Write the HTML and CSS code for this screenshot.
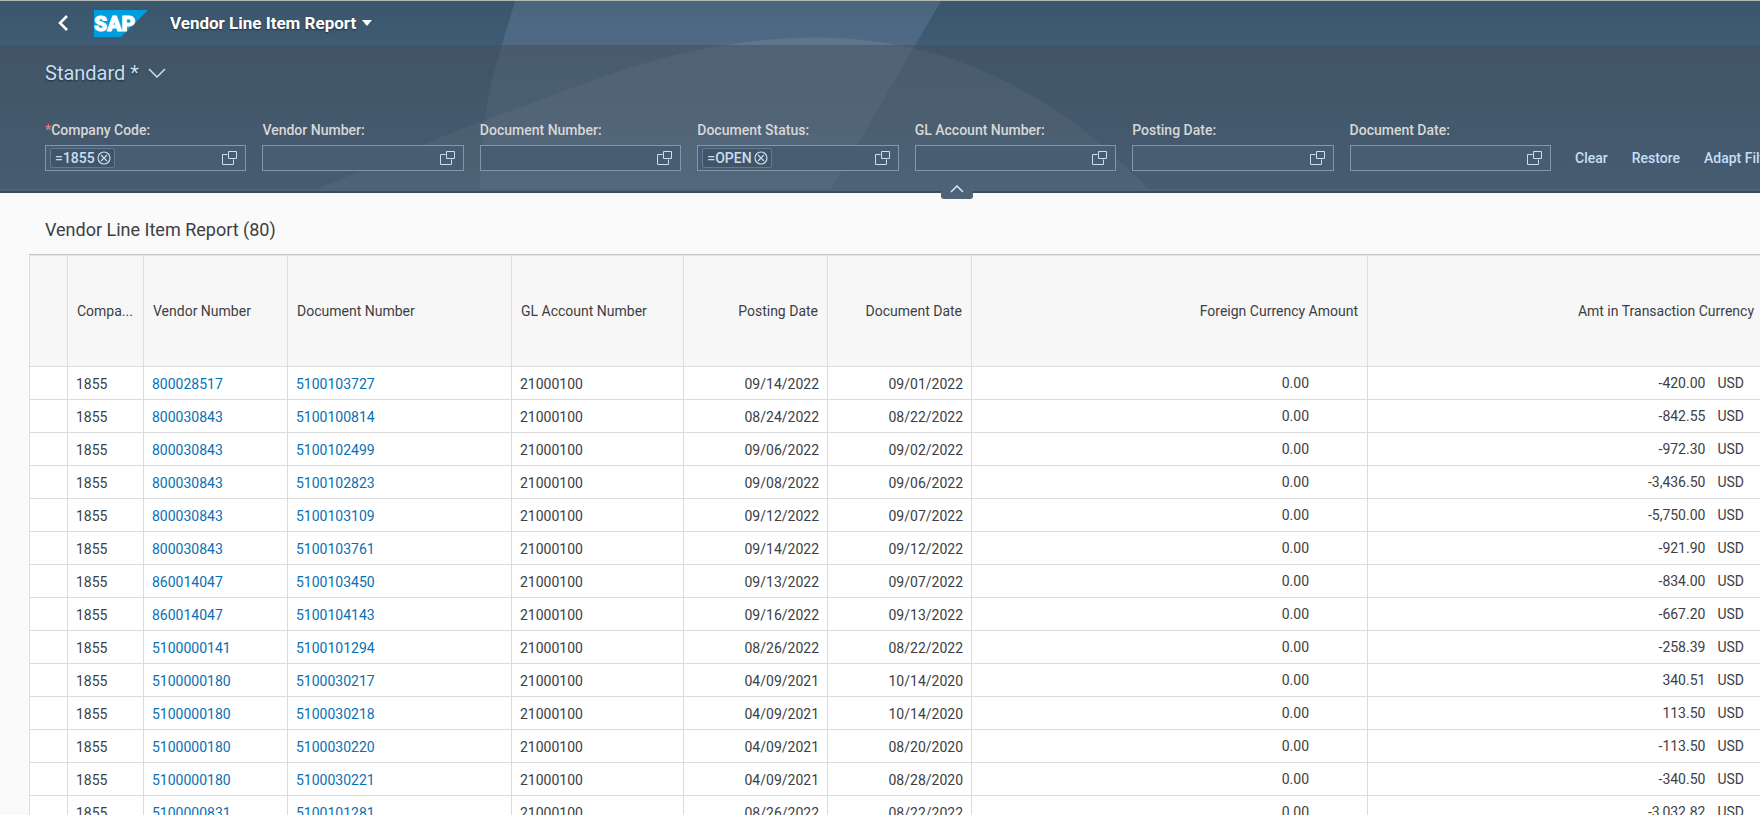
FILE: index.html
```html
<!DOCTYPE html>
<html lang="en">
<head>
<meta charset="utf-8">
<meta name="viewport" content="width=device-width, initial-scale=1">
<title>Vendor Line Item Report</title>
<link rel="stylesheet" href="styles.css">
</head>
<body>
<svg class="defs" aria-hidden="true">
  <symbol id="value-help" viewBox="0 0 16 16"><path d="M6.500 4.500H1.500V14.500H12.500V9.500M7.500 1.500H15.500V8.500H7.500Z"/></symbol>
  <symbol id="decline" viewBox="0 0 14 14"><circle cx="7" cy="7" r="6"/><path d="M4 4L10 10M10 4L4 10"/></symbol>
</svg>
<header class="top">
  <svg class="top-art" viewBox="0 0 1760 192" preserveAspectRatio="none" aria-hidden="true">
    <path class="art-band" d="M515 0H941L830 192H480C481 130 488 90 502 44Z"/>
    <path class="art-dome" d="M312 192C400 157 440 136 500 115C600 78 690 37 816 37C960 37 1070 105 1150 192Z"/>
  </svg>
  <div class="shell">
    <button class="back" type="button" aria-label="Back"><svg viewBox="0 0 12 18"><path d="M10 2L3 9L10 16"/></svg></button>
    <a class="logo" href="#" aria-label="SAP home"><svg viewBox="0 0 54 27"><path d="M0 0H54L27 27H0Z"/><text x="0" y="21">SAP</text></svg></a>
    <button class="app-title" type="button">Vendor Line Item Report<svg viewBox="0 0 10 6"><path d="M0 0H10L5 6Z"/></svg></button>
  </div>
  <div class="filterbar">
    <button class="variant" type="button">Standard *<svg viewBox="0 0 18 10"><path d="M1 1L9 9L17 1"/></svg></button>
    <div class="filter-row">
      <div class="filters">
        <div class="filter"><label for="f1"><span class="required">*</span>Company Code:</label>
          <div class="field"><span class="token">=1855<button type="button" aria-label="Remove 1855"><svg><use href="#decline"/></svg></button></span><input id="f1" type="text"><button class="help" type="button" aria-label="Value help"><svg><use href="#value-help"/></svg></button></div></div>
        <div class="filter"><label for="f2">Vendor Number:</label>
          <div class="field"><input id="f2" type="text"><button class="help" type="button" aria-label="Value help"><svg><use href="#value-help"/></svg></button></div></div>
        <div class="filter"><label for="f3">Document Number:</label>
          <div class="field"><input id="f3" type="text"><button class="help" type="button" aria-label="Value help"><svg><use href="#value-help"/></svg></button></div></div>
        <div class="filter"><label for="f4">Document Status:</label>
          <div class="field"><span class="token">=OPEN<button type="button" aria-label="Remove OPEN"><svg><use href="#decline"/></svg></button></span><input id="f4" type="text"><button class="help" type="button" aria-label="Value help"><svg><use href="#value-help"/></svg></button></div></div>
        <div class="filter"><label for="f5">GL Account Number:</label>
          <div class="field"><input id="f5" type="text"><button class="help" type="button" aria-label="Value help"><svg><use href="#value-help"/></svg></button></div></div>
        <div class="filter"><label for="f6">Posting Date:</label>
          <div class="field"><input id="f6" type="text"><button class="help" type="button" aria-label="Value help"><svg><use href="#value-help"/></svg></button></div></div>
        <div class="filter"><label for="f7">Document Date:</label>
          <div class="field"><input id="f7" type="text"><button class="help" type="button" aria-label="Value help"><svg><use href="#value-help"/></svg></button></div></div>
      </div>
      <div class="actions"><button type="button">Clear</button><button type="button">Restore</button><button type="button">Adapt Filters</button></div>
    </div>
  </div>
  <button class="collapse" type="button" aria-label="Collapse header"><svg viewBox="0 0 14 8"><path d="M1 7L7 1L13 7"/></svg></button>
</header>
<main class="report">
  <h1>Vendor Line Item Report (80)</h1>
  <table>
    <colgroup><col class="c-sel"><col class="c-company"><col class="c-vendor"><col class="c-doc"><col class="c-gl"><col class="c-date"><col class="c-date"><col class="c-foreign"><col></colgroup>
    <thead><tr><th></th><th>Compa...</th><th>Vendor Number</th><th>Document Number</th><th>GL Account Number</th><th class="num">Posting Date</th><th class="num">Document Date</th><th class="num">Foreign Currency Amount</th><th class="num last">Amt in Transaction Currency</th></tr></thead>
    <tbody>
    <tr><td></td><td>1855</td><td><a href="#">800028517</a></td><td><a href="#">5100103727</a></td><td>21000100</td><td class="num">09/14/2022</td><td class="num">09/01/2022</td><td class="amount foreign">0.00</td><td class="amount">-420.00<span>USD</span></td></tr>
    <tr><td></td><td>1855</td><td><a href="#">800030843</a></td><td><a href="#">5100100814</a></td><td>21000100</td><td class="num">08/24/2022</td><td class="num">08/22/2022</td><td class="amount foreign">0.00</td><td class="amount">-842.55<span>USD</span></td></tr>
    <tr><td></td><td>1855</td><td><a href="#">800030843</a></td><td><a href="#">5100102499</a></td><td>21000100</td><td class="num">09/06/2022</td><td class="num">09/02/2022</td><td class="amount foreign">0.00</td><td class="amount">-972.30<span>USD</span></td></tr>
    <tr><td></td><td>1855</td><td><a href="#">800030843</a></td><td><a href="#">5100102823</a></td><td>21000100</td><td class="num">09/08/2022</td><td class="num">09/06/2022</td><td class="amount foreign">0.00</td><td class="amount">-3,436.50<span>USD</span></td></tr>
    <tr><td></td><td>1855</td><td><a href="#">800030843</a></td><td><a href="#">5100103109</a></td><td>21000100</td><td class="num">09/12/2022</td><td class="num">09/07/2022</td><td class="amount foreign">0.00</td><td class="amount">-5,750.00<span>USD</span></td></tr>
    <tr><td></td><td>1855</td><td><a href="#">800030843</a></td><td><a href="#">5100103761</a></td><td>21000100</td><td class="num">09/14/2022</td><td class="num">09/12/2022</td><td class="amount foreign">0.00</td><td class="amount">-921.90<span>USD</span></td></tr>
    <tr><td></td><td>1855</td><td><a href="#">860014047</a></td><td><a href="#">5100103450</a></td><td>21000100</td><td class="num">09/13/2022</td><td class="num">09/07/2022</td><td class="amount foreign">0.00</td><td class="amount">-834.00<span>USD</span></td></tr>
    <tr><td></td><td>1855</td><td><a href="#">860014047</a></td><td><a href="#">5100104143</a></td><td>21000100</td><td class="num">09/16/2022</td><td class="num">09/13/2022</td><td class="amount foreign">0.00</td><td class="amount">-667.20<span>USD</span></td></tr>
    <tr><td></td><td>1855</td><td><a href="#">5100000141</a></td><td><a href="#">5100101294</a></td><td>21000100</td><td class="num">08/26/2022</td><td class="num">08/22/2022</td><td class="amount foreign">0.00</td><td class="amount">-258.39<span>USD</span></td></tr>
    <tr><td></td><td>1855</td><td><a href="#">5100000180</a></td><td><a href="#">5100030217</a></td><td>21000100</td><td class="num">04/09/2021</td><td class="num">10/14/2020</td><td class="amount foreign">0.00</td><td class="amount">340.51<span>USD</span></td></tr>
    <tr><td></td><td>1855</td><td><a href="#">5100000180</a></td><td><a href="#">5100030218</a></td><td>21000100</td><td class="num">04/09/2021</td><td class="num">10/14/2020</td><td class="amount foreign">0.00</td><td class="amount">113.50<span>USD</span></td></tr>
    <tr><td></td><td>1855</td><td><a href="#">5100000180</a></td><td><a href="#">5100030220</a></td><td>21000100</td><td class="num">04/09/2021</td><td class="num">08/20/2020</td><td class="amount foreign">0.00</td><td class="amount">-113.50<span>USD</span></td></tr>
    <tr><td></td><td>1855</td><td><a href="#">5100000180</a></td><td><a href="#">5100030221</a></td><td>21000100</td><td class="num">04/09/2021</td><td class="num">08/28/2020</td><td class="amount foreign">0.00</td><td class="amount">-340.50<span>USD</span></td></tr>
    <tr><td></td><td>1855</td><td><a href="#">5100000831</a></td><td><a href="#">5100101281</a></td><td>21000100</td><td class="num">08/26/2022</td><td class="num">08/22/2022</td><td class="amount foreign">0.00</td><td class="amount">-3,032.82<span>USD</span></td></tr>
    </tbody>
  </table>
</main>
</body>
</html>
```
FILE: styles.css
```css
* { box-sizing: border-box; }
body {
  margin: 0;
  height: 100vh;
  overflow: hidden;
  background: #fafafa;
  color: #3c4044;
  font: 14px/20px Roboto, "Liberation Sans", sans-serif;
}
button {
  margin: 0;
  padding: 0;
  border: 0;
  background: none;
  color: inherit;
  font: inherit;
  cursor: pointer;
}
svg { display: block; fill: none; }
.defs { position: absolute; width: 0; height: 0; }

.top {
  position: relative;
  border-top: 1px solid #b5b8b3;
  border-bottom: 2px solid #3a4c5e;
  background: linear-gradient(#3a566b, #405c75 44px, #4a6a8a);
}
.top-art { position: absolute; top: 0; left: 0; width: 100%; height: 100%; }
.art-band { fill: rgba(200, 210, 255, .12); }
.art-dome { fill: rgba(230, 235, 240, .1); }

.shell {
  position: relative;
  display: flex;
  align-items: center;
  height: 44px;
  padding-left: 57px;
  color: #fff;
}
.back svg { width: 12px; height: 18px; stroke: #fff; stroke-width: 2.5; }
.logo { margin: 0 22px 0 25px; }
.logo svg { width: 54px; height: 27px; }
.logo path { fill: #009de0; }
.logo text { fill: #fff; stroke: #fff; stroke-width: 1; font: 900 21px Roboto, sans-serif; }
.app-title {
  display: flex;
  align-items: center;
  gap: 6px;
  font-size: 17px;
  font-weight: 700;
  text-shadow: 0 1px 2px rgba(0, 0, 0, .5);
}
.app-title svg { width: 10px; height: 6px; fill: #fff; }

.filterbar {
  position: relative;
  padding: 16px 0 18px 45px;
  border-bottom: 2px solid #4e6378;
  background: rgba(66, 78, 88, .5);
}
.variant {
  display: flex;
  align-items: center;
  gap: 9px;
  height: 24px;
  color: #c5dff7;
  font-size: 20px;
  text-shadow: 0 1px 2px rgba(0, 0, 0, .5);
}
.variant svg { width: 18px; height: 10px; stroke: #c5dff7; stroke-width: 1.5; }
.filter-row { display: flex; align-items: flex-end; margin-top: 35px; }
.filters { display: grid; flex: 1; grid-template-columns: repeat(7, 1fr); gap: 16px; }
.filter { min-width: 0; }
.filter label {
  display: block;
  margin-bottom: 5px;
  color: #d8d8d8;
  font-weight: 500;
  white-space: nowrap;
}
.required { color: #e58080; }
.field {
  display: flex;
  align-items: center;
  height: 26px;
  padding: 0 8px 0 4px;
  border: 1px solid #7f98af;
  background: #495d72;
}
.field input {
  flex: 1;
  min-width: 0;
  height: 22px;
  padding: 0;
  border: 0;
  outline: 0;
  background: none;
  color: #c5dff7;
  font: inherit;
}
.help svg { width: 16px; height: 16px; stroke: #c5dff7; }
.token {
  display: flex;
  align-items: center;
  gap: 2px;
  height: 20px;
  padding: 0 3px 0 4px;
  border: 1px solid #5e7c97;
  border-radius: 2px;
  background: #435465;
  color: #c5dff7;
  font-weight: 500;
}
.token svg { width: 14px; height: 14px; stroke: #c5dff7; stroke-width: 1.2; }
.actions {
  display: flex;
  gap: 24px;
  width: 209px;
  padding: 0 0 3px 24px;
  color: #c5dff7;
  font-weight: 500;
  white-space: nowrap;
  text-shadow: 0 1px 2px rgba(0, 0, 0, .5);
}
.actions button { flex: none; }
.collapse {
  position: absolute;
  bottom: -8px;
  left: 941px;
  display: grid;
  place-items: center;
  width: 32px;
  height: 20px;
  border-radius: 3px;
  background: #4e6378;
}
.collapse svg { width: 14px; height: 8px; stroke: #d5e8fa; stroke-width: 1.5; }

.report { padding-left: 29px; }
h1 {
  margin: 0;
  padding: 25px 16px 12px;
  font-size: 18px;
  font-weight: 400;
  line-height: 24px;
}
table {
  width: 100%;
  border-top: 1px solid #c6c6c6;
  border-spacing: 0;
  table-layout: fixed;
  background: #fff;
}
.c-sel { width: 39px; }
.c-company { width: 76px; }
.c-vendor, .c-date { width: 144px; }
.c-doc { width: 224px; }
.c-gl { width: 172px; }
.c-foreign { width: 396px; }
th, td {
  overflow: hidden;
  border-right: 1px solid #dcdcdc;
  border-bottom: 1px solid #dcdcdc;
  text-align: left;
  text-overflow: ellipsis;
  white-space: nowrap;
}
th:first-child, td:first-child { border-left: 1px solid #dcdcdc; }
th:last-child, td:last-child { border-right: 0; }
th {
  height: 112px;
  padding: 0 9px;
  border-top: 1px solid #e4e4e4;
  background: #f7f7f7;
  font-weight: 400;
}
td { height: 33px; padding: 2px 8px 0; }
.num, .amount { text-align: right; }
th.last { padding-right: 6px; }
td.amount { padding: 0 16px 0 8px; }
td.foreign { padding-right: 58px; }
.amount span { margin-left: 12px; }
td a { color: #0a70b4; text-decoration: none; }
```
